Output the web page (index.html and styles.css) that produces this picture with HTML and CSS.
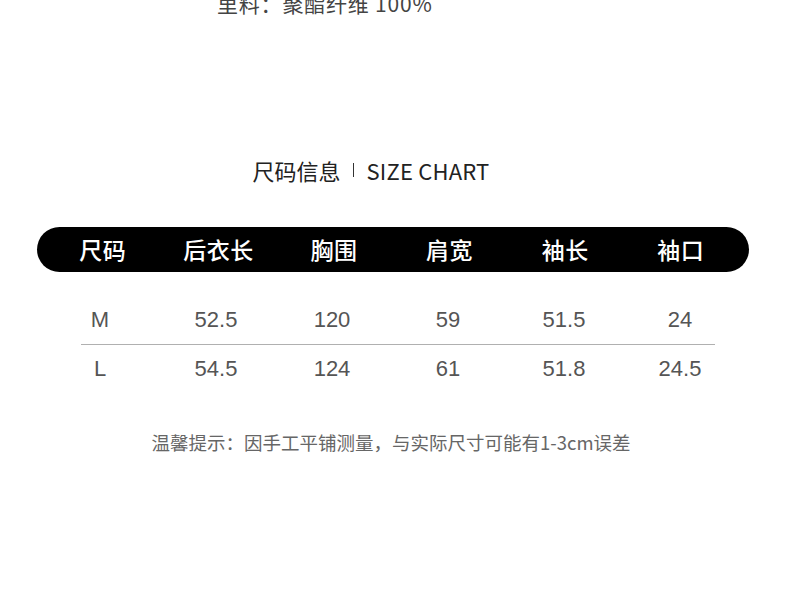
FILE: index.html
```html
<!DOCTYPE html>
<html lang="zh">
<head>
<meta charset="utf-8">
<link rel="stylesheet" href="styles.css">
</head>
<body>
<div class="page">
  <div class="fabric">里料：聚酯纤维 100%</div>

  <div class="title">
    <span class="title-cn">尺码信息</span>
    <span class="sep"></span>
    <span class="title-en">SIZE CHART</span>
  </div>

  <div class="bar">
    <div class="hcell">尺码</div>
    <div class="hcell">后衣长</div>
    <div class="hcell">胸围</div>
    <div class="hcell">肩宽</div>
    <div class="hcell">袖长</div>
    <div class="hcell">袖口</div>
  </div>

  <div class="rows">
    <div class="row">
      <div class="cell">M</div>
      <div class="cell">52.5</div>
      <div class="cell">120</div>
      <div class="cell">59</div>
      <div class="cell">51.5</div>
      <div class="cell">24</div>
    </div>
    <div class="divider"></div>
    <div class="row">
      <div class="cell">L</div>
      <div class="cell">54.5</div>
      <div class="cell">124</div>
      <div class="cell">61</div>
      <div class="cell">51.8</div>
      <div class="cell">24.5</div>
    </div>
  </div>

  <div class="note">温馨提示：因手工平铺测量，与实际尺寸可能有1-3cm误差</div>
</div>
</body>
</html>
```

FILE: styles.css
```css
* { box-sizing: border-box; }
html, body { margin: 0; padding: 0; background: #fff; }
body {
  width: 790px;
  height: 614px;
  overflow: hidden;
  font-family: "Noto Sans CJK SC", "Noto Sans", sans-serif;
}
.page { display: flex; flex-direction: column; }

.fabric {
  margin-top: -10px;
  padding-left: 217px;
  font-size: 21px;
  line-height: 26px;
  color: #444;
  letter-spacing: 0.8px;
}

.title {
  margin-top: 139px;
  display: flex;
  justify-content: center;
  align-items: center;
  height: 30px;
  color: #222;
  font-size: 22px;
  padding-right: 48px;
}
.sep {
  width: 1px;
  height: 14px;
  background: #333;
  margin: 0 13px 0 12px;
}
.title-en { letter-spacing: 0.2px; }

.bar {
  margin: 42px 41px 0 37px;
  height: 45px;
  border-radius: 23px;
  background: #000;
  display: grid;
  grid-template-columns: repeat(6, 115.6px);
  padding-left: 8px;
  align-items: center;
}
.hcell {
  text-align: center;
  color: #fff;
  font-size: 23px;
  font-weight: 500;
  letter-spacing: 0.5px;
  line-height: 45px;
}

.rows { margin-top: 24px; }
.row {
  display: grid;
  grid-template-columns: repeat(6, 116px);
  padding-left: 42px;
  height: 48px;
  align-items: center;
}
.cell {
  text-align: center;
  font-family: "Liberation Sans", "Noto Sans", sans-serif;
  font-size: 22px;
  color: #555;
}
.divider {
  height: 1px;
  background: #b0b0b0;
  margin: 0 75px 0 81px;
}

.note {
  margin-top: 36px;
  text-align: center;
  font-size: 18.5px;
  color: #666;
  padding-right: 8px;
}
```
